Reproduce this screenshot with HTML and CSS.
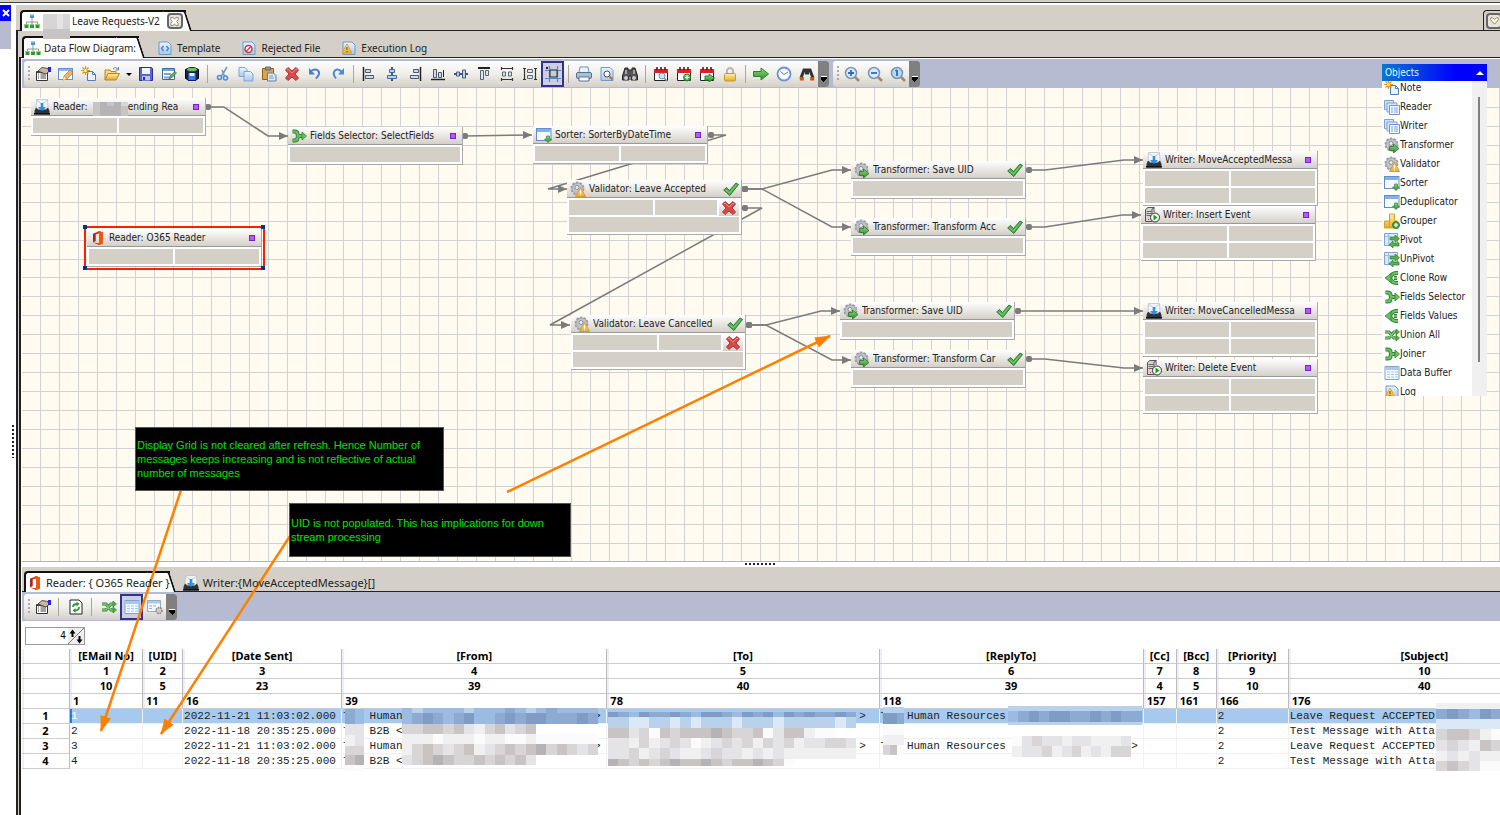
FILE: index.html
```html
<!DOCTYPE html>
<html lang="en">
<head>
    <meta charset="UTF-8">
    <meta name="viewport" content="width=device-width, initial-scale=1.0">
    <title>Leave Requests-V2</title>
    <link rel="stylesheet" href="styles.css">
</head>
<body>
    <svg class="sprite" aria-hidden="true">
        <defs>
            <linearGradient id="g-blue" x1="0" y1="0" x2="0" y2="1"><stop offset="0" stop-color="#eaf3fd"/><stop offset="1" stop-color="#a9c8ec"/></linearGradient>
            <linearGradient id="g-yellow" x1="0" y1="0" x2="0" y2="1"><stop offset="0" stop-color="#fff0a8"/><stop offset="1" stop-color="#e8a828"/></linearGradient>
            <linearGradient id="g-green" x1="0" y1="0" x2="0" y2="1"><stop offset="0" stop-color="#8fd67c"/><stop offset="1" stop-color="#2f8f2f"/></linearGradient>
            <marker id="wire-dot" viewBox="0 0 6 6" refX="3" refY="3" markerWidth="6" markerHeight="6" markerUnits="userSpaceOnUse"><rect width="6" height="6" rx="2" fill="#7b7b7b"/></marker>
            <marker id="wire-head" viewBox="0 0 9 8" refX="9" refY="4" markerWidth="9" markerHeight="8" markerUnits="userSpaceOnUse"><path d="M0 0l9 4-9 4z" fill="#7b7b7b"/></marker>
            <marker id="note-head" viewBox="0 0 16 11" refX="15" refY="5.5" markerWidth="16" markerHeight="11" markerUnits="userSpaceOnUse" orient="auto"><path d="M0 0l16 5.5L0 11z" fill="#ff8000"/></marker>
        </defs>
        <symbol id="i-tree" viewBox="0 0 16 16"><path d="M8 5v4M2.500 11V9h11v2M8 9v2" fill="none" stroke="#8a94a0"/><rect x="6" y="1" width="4" height="4" fill="#4f8fd6"/><rect x="6" y="1" width="4" height="1.500" fill="#a8cdf2"/><path d="M.5 11h4v4h-4zM6 11h4v4H6zM11.500 11h4v4h-4z" fill="#2f9a2f"/><path d="M.5 11h4v1h-4zM6 11h4v1H6zM11.500 11h4v1h-4z" fill="#8ad07a"/></symbol>
        <symbol id="i-tpl" viewBox="0 0 16 16"><path d="M2 2h9l3 3v9.500H2z" fill="url(#g-blue)" stroke="#6c9bd0"/><path d="M6.500 6L4.500 8.500l2 2.500M9.500 6l2 2.500-2 2.500" fill="none" stroke="#3b82d8" stroke-width="1.300"/></symbol>
        <symbol id="i-reject" viewBox="0 0 16 16"><path d="M2 2h9l3 3v9.500H2z" fill="url(#g-blue)" stroke="#6c9bd0"/><circle cx="7.500" cy="9" r="3.500" fill="#fff" stroke="#e03030" stroke-width="1.500"/><path d="M5 11.500l5-5" stroke="#e03030" stroke-width="1.300"/></symbol>
        <symbol id="i-log" viewBox="0 0 16 16"><path d="M2 2h9l3 3v9.500H2z" fill="url(#g-blue)" stroke="#6c9bd0"/><path d="M6 4l5 9H1z" fill="url(#g-yellow)" stroke="#e0a030"/><path d="M6 7v3M6 11v1" stroke="#704000"/></symbol>
        <symbol id="i-props" viewBox="0 0 16 16"><path d="M1.500 5.500h11v9h-11z" fill="#fff" stroke="#333"/><path d="M3 8h1M5.500 8H11M3 10h1M5.500 10H11M3 12h1M5.500 12H11M2 6.500h10" stroke="#444"/><path d="M3 5l4-3.500 6 1 1 3-3 2.500-3-1z" fill="#c9b99a" stroke="#333" stroke-width=".8"/><path d="M13 1h3v5h-3z" fill="#2525e8"/></symbol>
        <symbol id="i-edit" viewBox="0 0 16 16"><rect x=".5" y="2.500" width="14" height="11" fill="#fff" stroke="#5f92cf"/><path d="M1 3h13v2H1z" fill="#8db7e8"/><path d="M5 14l1-4 6-6 3 3-6 6z" fill="#f0b55a" stroke="#b97a24" stroke-width=".7"/><path d="M5 14l1-3 2 2z" fill="#fff3d8"/></symbol>
        <symbol id="i-new" viewBox="0 0 16 16"><path d="M6.500 5.500h5l3 3v6h-8z" fill="#eaf3fd" stroke="#4f7fb8"/><path d="M11.500 5.500v3h3" fill="none" stroke="#4f7fb8"/><path d="M4.500 0v9M0 4.500h9M1.500 1.500l6 6M7.500 1.500l-6 6" stroke="#d9941e" stroke-width="1.200"/><circle cx="4.500" cy="4.500" r="1.500" fill="#fff0a0"/></symbol>
        <symbol id="i-open" viewBox="0 0 16 16"><path d="M1 14V4h5l1 1.500h5V8" fill="#f6d98a" stroke="#b58420"/><path d="M1 14l3-6.500h11.500L12 14z" fill="url(#g-yellow)" stroke="#b58420"/><path d="M9 3q3-3 5 .5M14.500 1v3h-3" fill="none" stroke="#5b83b5"/></symbol>
        <symbol id="i-save" viewBox="0 0 16 16"><path d="M1.500 1.500h12l1 1v12h-13z" fill="#5e64d8" stroke="#2c3096"/><path d="M4 2h8v6H4z" fill="#f2f5ff"/><path d="M4 10h8v4.500H4z" fill="#b9c6ee"/><path d="M5 11h2v3H5z" fill="#2c3096"/></symbol>
        <symbol id="i-formedit" viewBox="0 0 16 16"><path d="M1.500 2.500h12v11h-12z" fill="#fff" stroke="#3b68a0"/><path d="M2 3h11v2H2zM3 7h7v2H3zM3 10.500h5v2H3z" fill="#7ba3d2"/><path d="M8 13l1-3 5-4.500 1.500 1.500-5 5z" fill="#6fa85a" stroke="#3f6f3f" stroke-width=".7"/></symbol>
        <symbol id="i-dbsave" viewBox="0 0 16 16"><path d="M1.500 3.500q6.500-4 13 0v9q-6.500 4-13 0z" fill="#1d2a3a" stroke="#000"/><ellipse cx="8" cy="3.500" rx="5" ry="1.800" fill="#69c452"/><path d="M4 6.500h8v8H4z" fill="#3f7fe0" stroke="#101c70"/><path d="M5.500 7h5v3h-5z" fill="#e8f0ff"/></symbol>
        <symbol id="i-cut" viewBox="0 0 16 16"><path d="M12 1L6.500 10M7 4l2.500 6" stroke="#7c97b8" stroke-width="1.500"/><circle cx="4.500" cy="11.500" r="2" fill="none" stroke="#4a90d9" stroke-width="1.600"/><circle cx="10.500" cy="12" r="2" fill="none" stroke="#4a90d9" stroke-width="1.600"/></symbol>
        <symbol id="i-copy" viewBox="0 0 16 16"><path d="M1 1.500h6l2 2v7H1z" fill="url(#g-blue)" stroke="#7aa5d8"/><path d="M6 5.500h6.500L15 8v7H6z" fill="url(#g-blue)" stroke="#7aa5d8"/></symbol>
        <symbol id="i-paste" viewBox="0 0 16 16"><path d="M1.500 2.500h11v11h-11z" fill="#dba449" stroke="#8d6119"/><path d="M4.500 1h5v3h-5z" fill="#999" stroke="#555" stroke-width=".8"/><path d="M6.500 7h6l2.500 2.500V15H6.500z" fill="#dbe8f8" stroke="#5c7fae"/><path d="M8 10h4M8 12h5" stroke="#7c9cc6"/></symbol>
        <symbol id="i-x" viewBox="0 0 16 16"><path d="M1.500 4L4 1.500l4 3.500 4-3.500L14.500 4 11 8l3.500 4-2.500 2.500L8 11l-4 3.500L1.500 12 5 8z" fill="#d94a4a" stroke="#b03035"/><path d="M3 4l1-1 4 4 4-4 1 1" fill="none" stroke="#f08a80"/></symbol>
        <symbol id="i-undo" viewBox="0 0 16 16"><path d="M3 6q4-4 8-1.500 3 3-2 8" fill="none" stroke="#4a7ed0" stroke-width="2"/><path d="M2 2v6.500h6z" fill="#4a7ed0"/></symbol>
        <symbol id="i-redo" viewBox="0 0 16 16"><path d="M12 6Q8 2 5 4.500q-3 3 1 8" fill="none" stroke="#4a8ad0" stroke-width="2"/><path d="M14 2v6.500H8z" fill="#4a8ad0"/></symbol>
        <symbol id="i-al" viewBox="0 0 16 16"><path d="M2.500 1v14" stroke="#222" stroke-width="1.500"/><path d="M4.500 3.500h5v3h-5zM4.500 9.500h8v3h-8z" fill="#cfdcea" stroke="#4a5a6c"/></symbol>
        <symbol id="i-ac" viewBox="0 0 16 16"><path d="M8 1v14" stroke="#222" stroke-width="1.500"/><path d="M5.500 3.500h5v3h-5zM3.500 9.500h9v3h-9z" fill="#b9d2ee" stroke="#3f6a9c"/></symbol>
        <symbol id="i-ar" viewBox="0 0 16 16"><path d="M13.500 1v14" stroke="#222" stroke-width="1.500"/><path d="M6.500 3.500h5v3h-5zM3.500 9.500h8v3h-8z" fill="#cfdcea" stroke="#4a5a6c"/></symbol>
        <symbol id="i-ab" viewBox="0 0 16 16"><path d="M1 13.500h14" stroke="#222" stroke-width="1.500"/><path d="M3.500 3.500h3v8h-3zM8.500 6.500h3v5h-3z" fill="#cfdcea" stroke="#4a5a6c"/><path d="M13.500 4v7" stroke="#222"/></symbol>
        <symbol id="i-am" viewBox="0 0 16 16"><path d="M1 8h14" stroke="#222" stroke-width="1.500"/><path d="M3.500 6h3v4h-3zM9.500 4h3v8h-3z" fill="#b9d2ee" stroke="#3f5a8c"/></symbol>
        <symbol id="i-at" viewBox="0 0 16 16"><path d="M2 2h12" stroke="#222" stroke-width="2"/><path d="M4.500 4.500h3v9h-3zM9.500 4.500h3v5h-3z" fill="#dfe5ea" stroke="#5a6672"/></symbol>
        <symbol id="i-sw" viewBox="0 0 16 16"><path d="M2 2.500h12M2 13.500h12M2.500 1v3M13.500 1v3M2.500 12v3M13.500 12v3" stroke="#333" stroke-width="1.200"/><path d="M3.500 6h3v4h-3zM9.500 6h3v4h-3z" fill="#dfe5ea" stroke="#5a6672"/></symbol>
        <symbol id="i-sh" viewBox="0 0 16 16"><path d="M2.500 2v12M13.500 2v12M1 2.500h3M1 13.500h3M12 2.500h3M12 13.500h3" stroke="#333" stroke-width="1.200"/><path d="M5.500 3.500h5v3h-5zM5.500 9.500h5v3h-5z" fill="#dfe5ea" stroke="#5a6672"/></symbol>
        <symbol id="i-grid" viewBox="0 0 16 16"><path d="M4.500 0v16M12.500 0v16M0 4.500h16M0 12.500h16" stroke="#5a86c8" stroke-width="1.200"/><path d="M5 4h7v7H5z" fill="#bfcfe0" stroke="#222"/><path d="M1 1h2v2H1z" fill="#222"/></symbol>
        <symbol id="i-print" viewBox="0 0 16 16"><path d="M4 1h8l1 6H3z" fill="#e8f3fd" stroke="#6b93bb"/><rect x=".5" y="6.500" width="15" height="6" rx="1.500" fill="#a9bfd6" stroke="#55718f"/><path d="M3 11h10v4H3z" fill="#fff" stroke="#55718f"/></symbol>
        <symbol id="i-preview" viewBox="0 0 16 16"><path d="M2 1.500h9l3 3v10H2z" fill="url(#g-blue)" stroke="#6c9bd0"/><circle cx="8" cy="8" r="3" fill="#fff" stroke="#555"/><path d="M10.500 10.500l3 3" stroke="#b57030" stroke-width="2"/></symbol>
        <symbol id="i-binoc" viewBox="0 0 16 16"><path d="M3 2h3v2h4V2h3l2.500 8v4H9v-4H7v4H.5v-4z" fill="#555" stroke="#222"/><circle cx="4" cy="12" r="2" fill="#ccc"/><circle cx="12" cy="12" r="2" fill="#ccc"/><path d="M4 4v4M12 4v4" stroke="#eee"/></symbol>
        <symbol id="i-calfind" viewBox="0 0 16 16"><path d="M1.500 3.500h13v11h-13z" fill="#fff" stroke="#222"/><path d="M1 3h14v4H1z" fill="#e02020"/><path d="M4 1v3M8 1v3M12 1v3" stroke="#222" stroke-width="1.500"/><circle cx="9" cy="10" r="3" fill="#cfe4fa" stroke="#6b93c0"/><path d="M11 12l3 3" stroke="#888" stroke-width="1.500"/></symbol>
        <symbol id="i-caladd" viewBox="0 0 16 16"><path d="M1.500 3.500h13v11h-13z" fill="#fff" stroke="#222"/><path d="M1 3h14v4H1z" fill="#e02020"/><path d="M4 1v3M8 1v3M12 1v3" stroke="#222" stroke-width="1.500"/><circle cx="11" cy="11.500" r="3.500" fill="url(#g-green)" stroke="#2e7d2e"/><path d="M11 9.500v4M9 11.500h4" stroke="#fff" stroke-width="1.200"/></symbol>
        <symbol id="i-calgo" viewBox="0 0 16 16"><path d="M1.500 3.500h13v11h-13z" fill="#fff" stroke="#222"/><path d="M1 3h14v4H1z" fill="#e02020"/><path d="M4 1v3M8 1v3M12 1v3" stroke="#222" stroke-width="1.500"/><path d="M6 10h4V8l5.500 4-5.500 4v-2H6z" fill="url(#g-green)" stroke="#2e7d2e"/></symbol>
        <symbol id="i-lock" viewBox="0 0 16 16"><path d="M5 8V4q3-4 6 0v4" fill="none" stroke="#b5b5b5" stroke-width="2"/><rect x="2.500" y="7.500" width="11" height="7.500" rx="1" fill="url(#g-yellow)" stroke="#c8963a"/></symbol>
        <symbol id="i-go" viewBox="0 0 16 16"><path d="M.5 5.500H8V2l7.500 6L8 14v-3.500H.5z" fill="url(#g-green)" stroke="#1f8a2a"/></symbol>
        <symbol id="i-clock" viewBox="0 0 16 16"><circle cx="8" cy="8" r="6.500" fill="#f4f8ff" stroke="#6a8fd8" stroke-width="1.800"/><path d="M4.500 5.500L8 8.500 12 6" fill="none" stroke="#777"/></symbol>
        <symbol id="i-magnet" viewBox="0 0 16 16"><path d="M2 12L5 4h2.500v3h1V4H11l3 8" fill="none" stroke="#333" stroke-width="3"/><path d="M.8 11h4v3.500h-4zM11.200 11h4v3.500h-4z" fill="#d94a20"/></symbol>
        <symbol id="i-zin" viewBox="0 0 16 16"><path d="M11 11l4 4" stroke="#a0896c" stroke-width="2.500"/><circle cx="7" cy="7" r="5.500" fill="#d8eafc" stroke="#7e93ac" stroke-width="1.500"/><path d="M7 4v6M4 7h6" stroke="#2e6cc0" stroke-width="1.800"/></symbol>
        <symbol id="i-zout" viewBox="0 0 16 16"><path d="M11 11l4 4" stroke="#a0896c" stroke-width="2.500"/><circle cx="7" cy="7" r="5.500" fill="#d8eafc" stroke="#7e93ac" stroke-width="1.500"/><path d="M4 7h6" stroke="#2e6cc0" stroke-width="1.800"/></symbol>
        <symbol id="i-zone" viewBox="0 0 16 16"><path d="M11 11l4 4" stroke="#a0896c" stroke-width="2.500"/><circle cx="7" cy="7" r="5.500" fill="#b8d8f8" stroke="#7e93ac" stroke-width="1.500"/><path d="M7 4v6M5.500 5L7 4" stroke="#2e6cc0" stroke-width="1.800"/></symbol>
        <symbol id="i-mail" viewBox="0 0 16 16"><path d="M2.500.5h11l.5 9H2z" fill="#f1f4f8" stroke="#b4bbc4" stroke-width=".7"/><path d="M3 1.500l5 3.500 5-3.500" fill="none" stroke="#c4ccd6"/><path d="M2 8.500L.5 12v3.500h15V12L14 8.500l-2 2H4z" fill="#2a323b"/><path d="M0 14h16v1.500H0z" fill="#111"/><path d="M6.700 4h2.600v4H12l-4 4-4-4h2.700z" fill="#2c8fe8"/></symbol>
        <symbol id="i-office" viewBox="0 0 16 16"><path d="M3 4l6-3 4 1.500v11L9 15l-6-2.500 6 .7V3.500L5.500 4.500V11L3 12.300z" fill="#d83b01"/><path d="M9 1l4 1.500v11L9 15z" fill="#eb5a10"/><path d="M3 4l2.500-1.300V11L3 12.300z" fill="#a4262c"/></symbol>
        <symbol id="i-join" viewBox="0 0 16 16"><path d="M1.500 3.500h2q3 0 3 2.500T9 8h2M1.500 12.500h2q3 0 3-2.500T9 8" fill="none" stroke="#2f7f35" stroke-width="4"/><path d="M1.500 3.500h2q3 0 3 2.500T9 8h2M1.500 12.500h2q3 0 3-2.500T9 8" fill="none" stroke="#6cc064" stroke-width="2.200"/><path d="M11 4L15.500 8 11 12z" fill="#6cc064" stroke="#2f7f35" stroke-width=".8"/></symbol>
        <symbol id="i-split" viewBox="0 0 16 16"><path d="M14 3h-2Q8 3 6 8q2 5 6 5h2M10 8h3" fill="none" stroke="#2f7f35" stroke-width="4"/><path d="M14 3h-2Q8 3 6 8q2 5 6 5h2M10 8h3" fill="none" stroke="#6cc064" stroke-width="2.200"/><path d="M7 3.500L1 8l6 4.500z" fill="#6cc064" stroke="#2f7f35" stroke-width=".8"/></symbol>
        <symbol id="i-union" viewBox="0 0 16 16"><path d="M1 5h4l5 6h3M1 11h4l5-6h3" fill="none" stroke="#2f7f35" stroke-width="3.200"/><path d="M1 5h4l5 6h3M1 11h4l5-6h3" fill="none" stroke="#7cc874" stroke-width="1.600"/><path d="M12 2l3.500 3L12 8zM12 8l3.500 3-3.500 3z" fill="#58b050" stroke="#2f7f35" stroke-width=".7"/></symbol>
        <symbol id="i-window" viewBox="0 0 16 16"><rect x=".5" y="1.500" width="14.500" height="12" fill="#f6faff" stroke="#5f8fc8"/><path d="M1 2h13.500v3H1z" fill="#86b0e4"/><path d="M10.500 9h3v3h2L12 15.500 8.500 12h2z" fill="url(#g-green)" stroke="#2f7f35" stroke-width=".7"/></symbol>
        <symbol id="i-gear" viewBox="0 0 16 16"><circle cx="7.500" cy="7.500" r="6" fill="#b9bcc0" stroke="#9a9da2" stroke-width="2" stroke-dasharray="2.400 1.300"/><circle cx="7.500" cy="7.500" r="5.300" fill="#c0c3c7" stroke="#9da1a6" stroke-width=".6"/><circle cx="7" cy="6.500" r="2" fill="#eceef0" stroke="#8d9196"/></symbol>
        <symbol id="i-trans" viewBox="0 0 16 16"><use href="#i-gear"/><path d="M5.500 9.500h4V7l5.500 4.500L9.500 16v-2.500h-4z" fill="url(#g-green)" stroke="#257525" stroke-width=".8"/></symbol>
        <symbol id="i-valid" viewBox="0 0 16 16"><use href="#i-gear"/><path d="M10.500 6.500l5 9h-10z" fill="url(#g-yellow)" stroke="#d89a28"/><path d="M10.500 9.500v3M10.500 13.500v1" stroke="#fff"/></symbol>
        <symbol id="i-server" viewBox="0 0 16 16"><path d="M1.500 2.500L4 .5h6l-2 2v12h-6.500z" fill="#d5d5d2" stroke="#555"/><path d="M2.500 4.500h5M2.500 6.500h5M2.500 8.500h5" stroke="#666"/><path d="M8 2.500l2-2V5" fill="none" stroke="#555"/><circle cx="11" cy="10.500" r="4.500" fill="#f2f7f0" stroke="#333"/><path d="M9.500 7.500l4 3-4 3z" fill="#1f9a1f"/><path d="M4 12h1v1H4z" fill="#d33"/></symbol>
        <symbol id="i-check" viewBox="0 0 16 16"><path d="M.7 9L3.500 6.500 6.500 9.500 13 2l2.500 1.500L6.800 14.500z" fill="#4cae4a" stroke="#24722a" stroke-width=".9"/><path d="M2.500 8.800l4 3.200 7-8.500" fill="none" stroke="#8fda82" stroke-width=".8"/></symbol>
        <symbol id="i-stack" viewBox="0 0 16 16"><path d="M.5 1.500h9v9h-9z" fill="#cfe1f6" stroke="#7aa3d6"/><path d="M3 4h10v9H3z" fill="#dbe9f9" stroke="#7aa3d6"/><path d="M5.500 6.500h10v9h-10z" fill="#f2f8ff" stroke="#6c98d0"/><path d="M7 9h2M10 9h4M7 11h2M10 11h4M7 13h2M10 13h4" stroke="#7aa3d6"/></symbol>
        <symbol id="i-group" viewBox="0 0 16 16"><path d="M.5 8h5v7h-5zM5.500 1h5v14h-5z" fill="url(#g-yellow)" stroke="#d9a020"/><path d="M10.500 7h3v8h-3z" fill="#f4c84a"/><circle cx="12" cy="12" r="3.500" fill="#4fa94a" stroke="#2f7f35"/><path d="M12 10v4M10 12h4" stroke="#fff" stroke-width="1.200"/></symbol>
        <symbol id="i-pivot" viewBox="0 0 16 16"><path d="M.5 1.500h13v12H.5z" fill="#dfeaf8" stroke="#7aa3d6"/><path d="M1 4.500h12M4.500 2v11" stroke="#9fc0e6"/><path d="M6 8V5.500h5V3l4.500 3.700L11 10V8zM15 11H9V9l-4 3.500L9 16v-2h6z" fill="#55b050" stroke="#2f7f35" stroke-width=".7"/></symbol>
        <symbol id="i-table" viewBox="0 0 16 16"><path d="M1 1.500h14v13H1z" fill="#f4f9ff" stroke="#7aa3d6"/><path d="M1 2h14v3H1z" fill="#a8c8ee"/><path d="M3 7h3M7 7h3M11 7h3M3 9.500h3M7 9.500h3M11 9.500h3M3 12h3M7 12h3M11 12h3" stroke="#a8c6ea"/></symbol>
        <symbol id="i-tablegear" viewBox="0 0 16 16"><path d="M.5 1.500h13v11H.5z" fill="#f4f9ff" stroke="#9aa9bd"/><path d="M1 2h12v2.500H1z" fill="#a8c8ee"/><path d="M2 7h3M6 7h3M2 9.500h3" stroke="#8ab0de"/><circle cx="12" cy="11.500" r="3" fill="#ccc" stroke="#888" stroke-width="1.600" stroke-dasharray="1.600 .9"/></symbol>
        <symbol id="i-refresh" viewBox="0 0 16 16"><path d="M2 1h9l3 3v11H2z" fill="#fff" stroke="#222"/><path d="M5 8q0-3 4-3M11 8q0 3.500-4 3.500" fill="none" stroke="#2a9a3a" stroke-width="1.800"/><path d="M8.500 2.500l3 2.500-3 2.500zM7.500 9l-3 2.500 3 2.500z" fill="#2a9a3a"/></symbol>
    </svg>

    <aside class="dock">
        <button class="dock-close" aria-label="Close"><svg viewBox="0 0 8 8"><path d="M1 1l6 6M7 1L1 7" stroke="#fff" stroke-width="2"/></svg></button>
        <div class="dock-bar"></div>
        <div class="dock-grip"></div>
    </aside>

    <main class="workspace">
        <nav class="tabs doc-tabs">
            <div class="tab active">
                <svg class="icon"><use href="#i-tree"/></svg>
                <span class="masked"></span>
                <a href="#doc">Leave Requests-V2</a>
                <button class="tab-close" aria-label="Close tab"><svg viewBox="0 0 12 12"><path d="M2 1.500h2.500L6 3.500l1.500-2H10V4L8.500 6 10 8v2.500H7.500L6 8.500l-1.500 2H2V8l1.500-2L2 4z" fill="#fffdf0" stroke="#857f68"/></svg></button>
            </div>
            <div class="tab-menu"><button aria-label="Tab list"><svg viewBox="0 0 12 12"><path d="M6 10L1.500 5q0-3 2.500-2l2 2 2-2q2.500-1 2.500 2z" fill="#fffbe8" stroke="#8a7a50"/></svg></button></div>
        </nav>

        <div class="doc-frame">
            <nav class="tabs view-tabs">
                <div class="tab active"><svg class="icon"><use href="#i-tree"/></svg><a href="#flow">Data Flow Diagram:</a></div>
                <div class="tab"><svg class="icon"><use href="#i-tpl"/></svg><a href="#template">Template</a></div>
                <div class="tab"><svg class="icon"><use href="#i-reject"/></svg><a href="#rejected">Rejected File</a></div>
                <div class="tab"><svg class="icon"><use href="#i-log"/></svg><a href="#log">Execution Log</a></div>
            </nav>

            <div class="view">
                <div class="toolstrip">
                    <div class="toolbar" data-tools="props edit new open dropdown save formedit dbsave | cut copy paste x undo redo | al ac ar ab am at sw sh grid* | print preview binoc | calfind caladd calgo lock | go clock magnet"></div>
                    <div class="toolbar" data-tools="zin zout zone"></div>
                </div>

                <section class="canvas" id="canvas">
                    <svg class="grid" id="grid"></svg>
                    <svg class="wires">
                        <g marker-start="url(#wire-dot)">
                            <path d="M186 19H202L246 48H266"/>
                            <path d="M443 48L510 47"/>
                            <path d="M689 47H704L526 101H545"/>
                            <path d="M723 101H740L810 82H829"/>
                            <path d="M723 101H740L810 139H829"/>
                            <path d="M723 120H740L528 237H548"/>
                            <path d="M727 237H744L799 223H818"/>
                            <path d="M727 237H744L810 272H829"/>
                            <path d="M1007 82H1023L1102 72H1121"/>
                            <path d="M1007 139H1023L1100 127H1119"/>
                            <path d="M996 223H1121"/>
                            <path d="M1007 271H1023L1102 280H1121"/>
                        </g>
                    </svg>
                </section>

                <section class="results">
                    <div class="splitter"></div>
                    <nav class="tabs result-tabs">
                        <div class="tab active"><svg class="icon"><use href="#i-office"/></svg><a href="#reader">Reader: { O365 Reader }</a></div>
                        <div class="tab"><svg class="icon"><use href="#i-mail"/></svg><a href="#writer">Writer:{MoveAcceptedMessage}[]</a></div>
                    </nav>
                    <div class="toolstrip">
                        <div class="toolbar roomy" data-tools="props | refresh | union table* tablegear"></div>
                    </div>
                    <div class="spinner">
                        <input type="text" value="4" aria-label="Row count">
                        <button aria-label="Change count"><svg viewBox="0 0 16 16"><path d="M0 16L16 0" stroke="#777"/><path d="M4.500 9V4M11.500 8v5" stroke="#000" stroke-width="2"/><path d="M1.500 5.500h6l-3-4zM8.500 11.500h6l-3 4z"/></svg></button>
                    </div>
                    <div class="table-wrap">
                        <table class="data">
                            <colgroup><col class="c-row"><col class="c-mail"><col class="c-uid"><col class="c-date"><col class="c-from"><col class="c-to"><col class="c-reply"><col class="c-cc"><col class="c-uid"><col class="c-prio"><col class="c-to"></colgroup>
                            <thead>
                                <tr><th></th><th>[EMail No]</th><th>[UID]</th><th>[Date Sent]</th><th>[From]</th><th>[To]</th><th>[ReplyTo]</th><th>[Cc]</th><th>[Bcc]</th><th>[Priority]</th><th>[Subject]</th></tr>
                                <tr><th></th><th>1</th><th>2</th><th>3</th><th>4</th><th>5</th><th>6</th><th>7</th><th>8</th><th>9</th><th>10</th></tr>
                                <tr><th></th><th>10</th><th>5</th><th>23</th><th>39</th><th>40</th><th>39</th><th>4</th><th>5</th><th>10</th><th>40</th></tr>
                                <tr class="offsets"><th></th><th>1</th><th>11</th><th>16</th><th>39</th><th>78</th><th>118</th><th>157</th><th>161</th><th>166</th><th>176</th></tr>
                            </thead>
                            <tbody>
                                <tr class="selected"><th>1</th><td>1</td><td></td><td>2022-11-21 11:03:02.000</td><td>T   Human                             &gt;</td><td>                                      &gt;</td><td>T   Human Resources</td><td></td><td></td><td>2</td><td>Leave Request ACCEPTED</td></tr>
                                <tr><th>2</th><td>2</td><td></td><td>2022-11-18 20:35:25.000</td><td>T   B2B &lt;</td><td></td><td></td><td></td><td></td><td>2</td><td>Test Message with Atta</td></tr>
                                <tr><th>3</th><td>3</td><td></td><td>2022-11-21 11:03:02.000</td><td>T   Human                             &gt;</td><td>                                      &gt;</td><td>T   Human Resources                   &gt;</td><td></td><td></td><td>2</td><td>Leave Request ACCEPTED</td></tr>
                                <tr><th>4</th><td>4</td><td></td><td>2022-11-18 20:35:25.000</td><td>T   B2B &lt;</td><td></td><td></td><td></td><td></td><td>2</td><td>Test Message with Atta</td></tr>
                            </tbody>
                        </table>
                    </div>
                </section>
            </div>
        </div>
    </main>

    <aside class="palette">
        <h2>Objects <span class="collapse"></span></h2>
        <div class="palette-body">
            <ul>
                <li><svg class="icon"><use href="#i-new"/></svg>Note</li>
                <li><svg class="icon"><use href="#i-stack"/></svg>Reader</li>
                <li><svg class="icon"><use href="#i-stack"/></svg>Writer</li>
                <li><svg class="icon"><use href="#i-trans"/></svg>Transformer</li>
                <li><svg class="icon"><use href="#i-valid"/></svg>Validator</li>
                <li><svg class="icon"><use href="#i-window"/></svg>Sorter</li>
                <li><svg class="icon"><use href="#i-window"/></svg>Deduplicator</li>
                <li><svg class="icon"><use href="#i-group"/></svg>Grouper</li>
                <li><svg class="icon"><use href="#i-pivot"/></svg>Pivot</li>
                <li><svg class="icon"><use href="#i-pivot"/></svg>UnPivot</li>
                <li><svg class="icon"><use href="#i-split"/></svg>Clone Row</li>
                <li><svg class="icon"><use href="#i-join"/></svg>Fields Selector</li>
                <li><svg class="icon"><use href="#i-split"/></svg>Fields Values</li>
                <li><svg class="icon"><use href="#i-union"/></svg>Union All</li>
                <li><svg class="icon"><use href="#i-join"/></svg>Joiner</li>
                <li><svg class="icon"><use href="#i-table"/></svg>Data Buffer</li>
                <li><svg class="icon"><use href="#i-log"/></svg>Log</li>
            </ul>
            <div class="palette-scroll"></div>
        </div>
    </aside>

    <svg class="overlay" aria-hidden="true">
        <g id="masks"></g>
        <g class="arrows">
            <path d="M181 490L101 731"/>
            <path d="M290 536L161 734"/>
            <path d="M507 492L830 336"/>
        </g>
    </svg>
    <p class="callout callout-grid">Display Grid is not cleared after refresh. Hence Number of messages keeps increasing and is not reflective of actual number of messages</p>
    <p class="callout callout-uid">UID is not populated. This has implications for down stream processing</p>

    <script src="script.js"></script>
</body>
</html>
```
FILE: styles.css
```css
* {
    box-sizing: border-box;
}
body {
    margin: 0;
    height: 100vh;
    display: flex;
    position: relative;
    overflow: hidden;
    padding-top: 5px;
    background: linear-gradient(#d4d0c8 2px, #444 2px, #444 3px, #fff 3px);
    font-family: "DejaVu Sans Condensed", "Noto Sans", sans-serif;
    font-size: 10px;
    line-height: 15px;
    color: #222;
}
a {
    color: inherit;
    text-decoration: none;
}
button {
    padding: 0;
    border: none;
    background: none;
    display: flex;
    align-items: center;
    justify-content: center;
}
.sprite {
    position: absolute;
    width: 0;
    height: 0;
}
.icon {
    width: 16px;
    height: 16px;
    flex: none;
}

/* left dock */
.dock {
    width: 16px;
    flex: none;
    display: flex;
    flex-direction: column;
}
.dock-close {
    width: 11px;
    height: 16px;
    background: #0000ff;
}
.dock-close svg {
    width: 8px;
    height: 8px;
}
.dock-bar {
    width: 11px;
    height: 28px;
    background: #b6bbd2;
}
.dock-grip {
    width: 2px;
    height: 33px;
    margin: 376px 0 0 12px;
    background: repeating-linear-gradient(#222 0 2px, transparent 2px 4px);
}

.workspace {
    flex: 1;
    min-width: 0;
    display: flex;
    flex-direction: column;
}

/* tabs */
.tabs {
    display: flex;
    align-items: flex-end;
    background: #d4d0c8;
    border-bottom: 1px solid #222;
    flex: none;
    font-family: "Noto Sans", "Open Sans", sans-serif;
}
.tab {
    position: relative;
    display: flex;
    align-items: center;
    gap: 4px;
    height: 20px;
}
.tab > * {
    position: relative;
    z-index: 1;
}
.tab.active {
    gap: 3px;
}
.tab.active::before,
.tab.active::after {
    content: "";
    position: absolute;
    z-index: 0;
    top: 0;
    bottom: -1px;
    background: #fff;
    border-top: 2px solid #111;
}
.tab.active::before {
    left: 0;
    right: 6px;
    border-left: 2px solid #111;
    border-radius: 4px 0 0 0;
}
.tab.active::after {
    right: 0;
    width: 20px;
    border-right: 2px solid #111;
    border-radius: 0 3px 0 0;
    transform: skewX(18deg);
    transform-origin: bottom;
}
.doc-tabs {
    height: 26px;
    padding-left: 4px;
}
.doc-tabs .tab {
    padding: 2px 9px 0 4px;
}
.masked {
    width: 26px;
}
.tab-close,
.tab-menu button {
    width: 16px;
    height: 16px;
    margin-left: 4px;
    border: 2px solid #666;
    border-radius: 4px;
    background: #e8e5df;
}
.tab-close svg,
.tab-menu svg {
    flex: none;
    width: 11px;
    height: 11px;
}
.tab-menu {
    display: flex;
    align-items: center;
    height: 20px;
    margin-left: auto;
    margin-right: -2px;
    border-left: 1px solid #222;
    border-top: 1px solid #222;
    border-radius: 4px 0 0 0;
}
.tab-menu button {
    margin-left: 2px;
}
.doc-frame {
    flex: 1;
    min-height: 0;
    display: flex;
    flex-direction: column;
    border-left: 2px solid #222;
    padding-left: 1px;
    background: #d4d0c8;
}
.view-tabs {
    height: 27px;
    padding-left: 3px;
    gap: 9px;
}
.view-tabs .tab {
    height: 21px;
    padding: 3px 9px 0 3px;
}
.view-tabs .tab.active {
    padding-right: 9px;
}
.view {
    flex: 1;
    min-height: 0;
    display: flex;
    flex-direction: column;
    border-left: 2px solid #222;
    padding: 1px 0 0 1px;
    background: #fff;
}

/* toolbars */
.toolstrip {
    flex: none;
    display: flex;
    gap: 4px;
    height: 29px;
    padding: 2px 0 1px 2px;
    background: #b6bbd2;
}
.toolbar {
    display: flex;
    align-items: stretch;
    border-radius: 3px;
    background: linear-gradient(#fdfdfc, #f0eeea 50%, #d4d0c8);
}
.grip {
    width: 2px;
    margin: 5px 1px 5px 4px;
    background: repeating-linear-gradient(#aaa 0 2px, transparent 2px 4px);
}
.toolbar button {
    width: 23px;
}
.toolbar button.dropdown {
    width: 11px;
}
.toolbar button.dropdown::before {
    content: "";
    border: 3px solid transparent;
    border-top-color: #000;
    border-bottom: 0;
}
.toolbar button.pressed {
    border: 2px solid #33338f;
    background: #cdcfe0;
}
.toolbar .sep {
    width: 1px;
    margin: 4px 3px 4px 4px;
    background: #aaa69e;
}
.toolbar.roomy .sep {
    margin: 4px 5px 4px 4px;
}
.toolbar button.more {
    width: 11px;
    align-items: flex-end;
    padding-bottom: 5px;
    background: #808080;
    border-radius: 0 3px 3px 0;
}
.toolbar button.more::before {
    content: "";
    width: 6px;
    height: 5px;
    border-top: 1px solid #fff;
    background: conic-gradient(from 135deg at 50% 100%, transparent 180deg, #000 180deg 270deg, transparent 0);
}

/* diagram */
.canvas {
    position: relative;
    flex: 474;
    min-height: 0;
    overflow: hidden;
    background: #fffbf0;
}
.grid,
.wires {
    position: absolute;
    inset: 0;
    width: 100%;
    height: 100%;
}
.grid path {
    stroke: #d2d2d4;
}
.wires path {
    fill: none;
    stroke: #7b7b7b;
    stroke-width: 1.5;
    marker-end: url(#wire-head);
}
.node {
    position: absolute;
    width: 175px;
    background: #fff;
    border-right: 1px solid #aaa;
    border-bottom: 1px solid #aaa;
}
.node.selected {
    outline: 2px solid #ff1e00;
    outline-offset: 1px;
}
.handle {
    position: absolute;
    width: 4px;
    height: 4px;
    background: #003399;
}
.handle.tl { left: -4px; top: -4px; }
.handle.tr { right: -4px; top: -4px; }
.handle.bl { left: -4px; bottom: -4px; }
.handle.br { right: -4px; bottom: -4px; }
.node-head {
    display: flex;
    align-items: center;
    gap: 3px;
    height: 18px;
    padding-left: 3px;
    background: linear-gradient(#fff, #d4d0c8);
    border-bottom: 1px solid #999;
}
.node-title {
    width: 130px;
    flex: none;
    overflow: hidden;
    white-space: pre;
    line-height: 17px;
}
.redacted {
    display: inline-block;
    width: 40px;
}
.port {
    width: 6px;
    height: 6px;
    margin-left: 7px;
    border: 1px solid #7a1fd0;
    background: #b45cf0;
}
.node-head .ok {
    margin-left: 1px;
}
.node-body {
    display: flex;
    flex-direction: column;
    gap: 2px;
    padding: 2px;
}
.node-row {
    display: flex;
    gap: 2px;
    height: 15px;
}
.node-row span {
    flex: 1;
    background: #d4d0c8;
}
.node-row span:first-child:nth-last-child(3) {
    flex: none;
    width: 84px;
}
.fail {
    display: flex;
    justify-content: center;
    width: 20px;
    height: 16px;
    background: linear-gradient(#fff, #d4d0c8);
}

/* results panel */
.results {
    flex: 253;
    min-height: 0;
    display: flex;
    flex-direction: column;
    border-top: 1px solid #b4b4b4;
}
.splitter {
    flex: none;
    height: 5px;
    background: repeating-linear-gradient(90deg, #222 0 2px, transparent 2px 4px) center top 1px / 32px 2px no-repeat;
}
.result-tabs {
    height: 25px;
    padding-left: 2px;
    gap: 4px;
    font-size: 11px;
}
.result-tabs .tab {
    height: 20px;
    padding: 3px 6px 0 3px;
}
.spinner {
    display: flex;
    flex: none;
    width: 60px;
    height: 18px;
    margin: 6px 0 4px 3px;
    border: 1px solid #999;
}
.spinner input {
    flex: 1;
    min-width: 0;
    padding: 0 2px 2px;
    border: none;
    outline: none;
    font: inherit;
    text-align: right;
}
.spinner button {
    width: 16px;
    background: #eee;
}
.table-wrap {
    overflow: hidden;
}
.data {
    table-layout: fixed;
    width: 1539px;
    border-collapse: separate;
    border-spacing: 0;
    font-size: 11px;
}
.c-row { width: 48px; }
.c-mail { width: 73px; }
.c-uid { width: 40px; }
.c-date { width: 159px; }
.c-from { width: 265px; }
.c-to { width: 272px; }
.c-reply { width: 264px; }
.c-cc { width: 33px; }
.c-prio { width: 72px; }
.data th,
.data td {
    height: 15px;
    padding: 0 3px;
    line-height: 14px;
    overflow: hidden;
    white-space: pre;
}
.data th {
    font-family: "Noto Sans", "Open Sans", sans-serif;
    font-weight: bold;
    color: #000;
    border-right: 1px solid #bbb;
    border-bottom: 1px solid #ccc;
    box-shadow: inset 2px 0 #eeeefa;
}
.offsets th {
    text-align: left;
}
.data td {
    padding: 0 1px;
    font-family: "Liberation Mono", monospace;
    border-right: 1px solid #f0f0f0;
    border-bottom: 1px solid #f0f0f0;
}
.selected td {
    background: #a6c9ef;
}
.selected td:nth-child(2) {
    color: #fff;
    box-shadow: inset 2px 0 #1f7fe0;
}

/* floating object palette */
.palette {
    position: absolute;
    z-index: 2;
    top: 64px;
    right: 13px;
    width: 105px;
    height: 332px;
    display: flex;
    flex-direction: column;
    background: #fff;
}
.palette h2 {
    flex: none;
    display: flex;
    align-items: center;
    justify-content: space-between;
    height: 17px;
    margin: 0;
    padding: 0 3px;
    font-size: 10px;
    font-weight: normal;
    color: #dff;
    background: linear-gradient(90deg, #0878d0, #00f 70%);
}
.collapse {
    border: 4px solid transparent;
    border-bottom-color: #fff;
    border-top: 0;
}
.palette-body {
    flex: 1;
    min-height: 0;
    display: flex;
    overflow: hidden;
}
.palette ul {
    flex: 1;
    min-width: 0;
    margin: -3px 0 0;
    padding: 0 0 0 2px;
    list-style: none;
}
.palette li {
    display: flex;
    align-items: center;
    height: 19px;
    white-space: nowrap;
}
.palette-scroll {
    flex: none;
    width: 15px;
    background: linear-gradient(#808080, #808080) 6px 16px / 2px calc(100% - 50px) no-repeat #f0f0f0;
}

/* annotations */
.overlay {
    position: absolute;
    inset: 0;
    width: 100%;
    height: 100%;
    pointer-events: none;
}
.arrows path {
    fill: none;
    stroke: #ff8000;
    stroke-width: 2.5;
    marker-end: url(#note-head);
}
.callout {
    position: absolute;
    margin: 0;
    padding: 0 1px;
    display: flex;
    align-items: center;
    border: 1px solid #555;
    background: #000;
    color: #00e400;
    font-family: "Liberation Sans", Arial, sans-serif;
    font-size: 11px;
    line-height: 14px;
}
.callout-grid {
    left: 135px;
    top: 427px;
    width: 309px;
    height: 64px;
}
.callout-uid {
    left: 289px;
    top: 503px;
    width: 282px;
    height: 54px;
}
```
FILE: script.js
```js
const SVG = 'http://www.w3.org/2000/svg';

function icon(name, cls = '') {
    return `<svg class="icon ${cls}"><use href="#i-${name}"/></svg>`;
}

// toolbars: names are icons, "|" is a separator, "*" marks a pressed button
document.querySelectorAll('.toolbar').forEach(bar => {
    let html = '<span class="grip"></span>';
    bar.dataset.tools.split(' ').forEach(tool => {
        if (tool === '|') {
            html += '<span class="sep"></span>';
        } else if (tool === 'dropdown') {
            html += '<button class="dropdown" aria-label="Open recent"></button>';
        } else {
            const name = tool.replace('*', '');
            html += `<button class="${tool.endsWith('*') ? 'pressed' : ''}" aria-label="${name}">${icon(name)}</button>`;
        }
    });
    bar.innerHTML = html + '<button class="more" aria-label="More"></button>';
});

// background grid
const STEP = 18.94;
const canvas = document.getElementById('canvas');
let lines = '';
for (let x = 18.4; x < canvas.clientWidth; x += STEP) {
    lines += `M${Math.round(x) + 0.5} 0V${canvas.clientHeight}`;
}
for (let y = 19; y < canvas.clientHeight; y += STEP) {
    lines += `M0 ${Math.round(y) + 0.5}H${canvas.clientWidth}`;
}
document.getElementById('grid').innerHTML = `<path d="${lines}"/>`;

// rows: number of cells in each row of the node, "f" adds the fail output
const nodes = [
    { x: 9, y: 10, icon: 'mail', title: 'Reader:<i class="redacted"></i>ending Rea', rows: ['2'] },
    { x: 266, y: 39, icon: 'join', title: 'Fields Selector: SelectFields', rows: ['1'] },
    { x: 511, y: 38, icon: 'window', title: 'Sorter: SorterByDateTime', rows: ['2'] },
    { x: 545, y: 92, icon: 'valid', title: 'Validator: Leave Accepted', rows: ['2f', '1'], ok: true },
    { x: 549, y: 227, icon: 'valid', title: 'Validator: Leave Cancelled', rows: ['2f', '1'], ok: true },
    { x: 829, y: 73, icon: 'trans', title: 'Transformer: Save UID', rows: ['1'], ok: true },
    { x: 829, y: 130, icon: 'trans', title: 'Transformer: Transform Acc', rows: ['1'], ok: true },
    { x: 818, y: 214, icon: 'trans', title: 'Transformer: Save UID', rows: ['1'], ok: true },
    { x: 829, y: 262, icon: 'trans', title: 'Transformer: Transform Car', rows: ['1'], ok: true },
    { x: 1121, y: 63, icon: 'mail', title: 'Writer: MoveAcceptedMessa', rows: ['2', '2'] },
    { x: 1119, y: 118, icon: 'server', title: 'Writer: Insert Event', rows: ['2', '2'] },
    { x: 1121, y: 214, icon: 'mail', title: 'Writer: MoveCancelledMessa', rows: ['2', '2'] },
    { x: 1121, y: 271, icon: 'server', title: 'Writer: Delete Event', rows: ['2', '2'] },
    { x: 65, y: 141, icon: 'office', title: 'Reader: O365 Reader', rows: ['2'], selected: true }
];

nodes.forEach(n => {
    const el = document.createElement('div');
    el.className = 'node' + (n.selected ? ' selected' : '');
    el.style.left = n.x + 'px';
    el.style.top = n.y + 'px';
    const rows = n.rows.map(r => {
        const cells = '<span></span>'.repeat(parseInt(r));
        return `<div class="node-row">${cells}${r.endsWith('f') ? `<div class="fail">${icon('x')}</div>` : ''}</div>`;
    }).join('');
    el.innerHTML = `<div class="node-head">${icon(n.icon)}<span class="node-title">${n.title}</span>` +
        (n.ok ? icon('check', 'ok') : '<span class="port"></span>') +
        `</div><div class="node-body">${rows}</div>` +
        (n.selected ? '<i class="handle tl"></i><i class="handle tr"></i><i class="handle bl"></i><i class="handle br"></i>' : '');
    canvas.appendChild(el);
});

// mosaic patches over private values, one letter per block
const SHADES = {
    a: '#7f9cc4', b: '#8dabd0', c: '#9bbbe2', d: '#b9d1ea', k: '#dbe8f6',
    i: '#b6b3b6', e: '#c8c4c4', f: '#d8d5d7', g: '#e4e4e6', h: '#f0f0f1', j: '#fbfbfb'
};
const masks = [
    { x: 43, y: 14, w: 27, rows: [[15, 'ffgf'], [10, 'eeee']] },
    { x: 93, y: 102, w: 35, rows: [[4, 'eieif'], [10, 'eiiie']] },
    { x: 345, y: 709, w: 19, rows: [[15, 'bc'], [11, 'gg'], [11, 'hg'], [9, 'ff'], [10, 'ei'], [6, 'jj']] },
    { x: 402, y: 708, w: 196, rows: [
        [5, 'cdccccdcccbcdcbcccc'], [11, 'cbabcbaccbabaabbbab'], [10, 'ffeefeghfegfe      '],
        [10, 'hhhjhhhjhhjjhjjjjjj'], [11, 'hfefgfehgfefeifefgf'], [10, 'gfeieffefefeg      ']] },
    { x: 608, y: 712, w: 248, rows: [
        [5, 'abcabbabcaabcabacababbab'], [11, 'ddkkddkdkdddkdddkdddddkd'], [10, 'eegfjefeeeieffejgeehjj  '],
        [10, 'gghfhgfgjhgfgfhfgfhggffg'], [11, 'ggfhgfghhgfgghghghhhhhhh'], [7, 'iefefeieeiefeeiefj      ']] },
    { x: 883, y: 707, w: 21, rows: [[6, 'dd'], [11, 'aab'], [11, 'jjj'], [10, 'hhh'], [10, 'fej']] },
    { x: 1008, y: 706, w: 134, rows: [[5, 'ddddddddddddd'], [11, 'cbabaabbababb'], [3, 'ddddddddddddd']] },
    { x: 1012, y: 736, w: 119, rows: [[10, 'jgfgghgghhhg'], [11, 'hggfhgfhghff']] },
    { x: 1436, y: 703, w: 66, rows: [[6, 'hhhhhh'], [10, 'babcab'], [10, 'kkkkkk'], [11, 'feefhj'], [11, 'gfghef'], [10, 'hghghh'], [10, 'fefgjj']] }
];

masks.forEach(m => {
    let y = m.y;
    m.rows.forEach(([h, blocks]) => {
        const w = m.w / blocks.length;
        [...blocks].forEach((b, i) => {
            if (b === ' ') return;
            const r = document.createElementNS(SVG, 'rect');
            r.setAttribute('x', m.x + Math.round(i * w));
            r.setAttribute('y', y);
            r.setAttribute('width', Math.round((i + 1) * w) - Math.round(i * w));
            r.setAttribute('height', h);
            r.setAttribute('fill', SHADES[b]);
            document.getElementById('masks').appendChild(r);
        });
        y += h;
    });
});
```
